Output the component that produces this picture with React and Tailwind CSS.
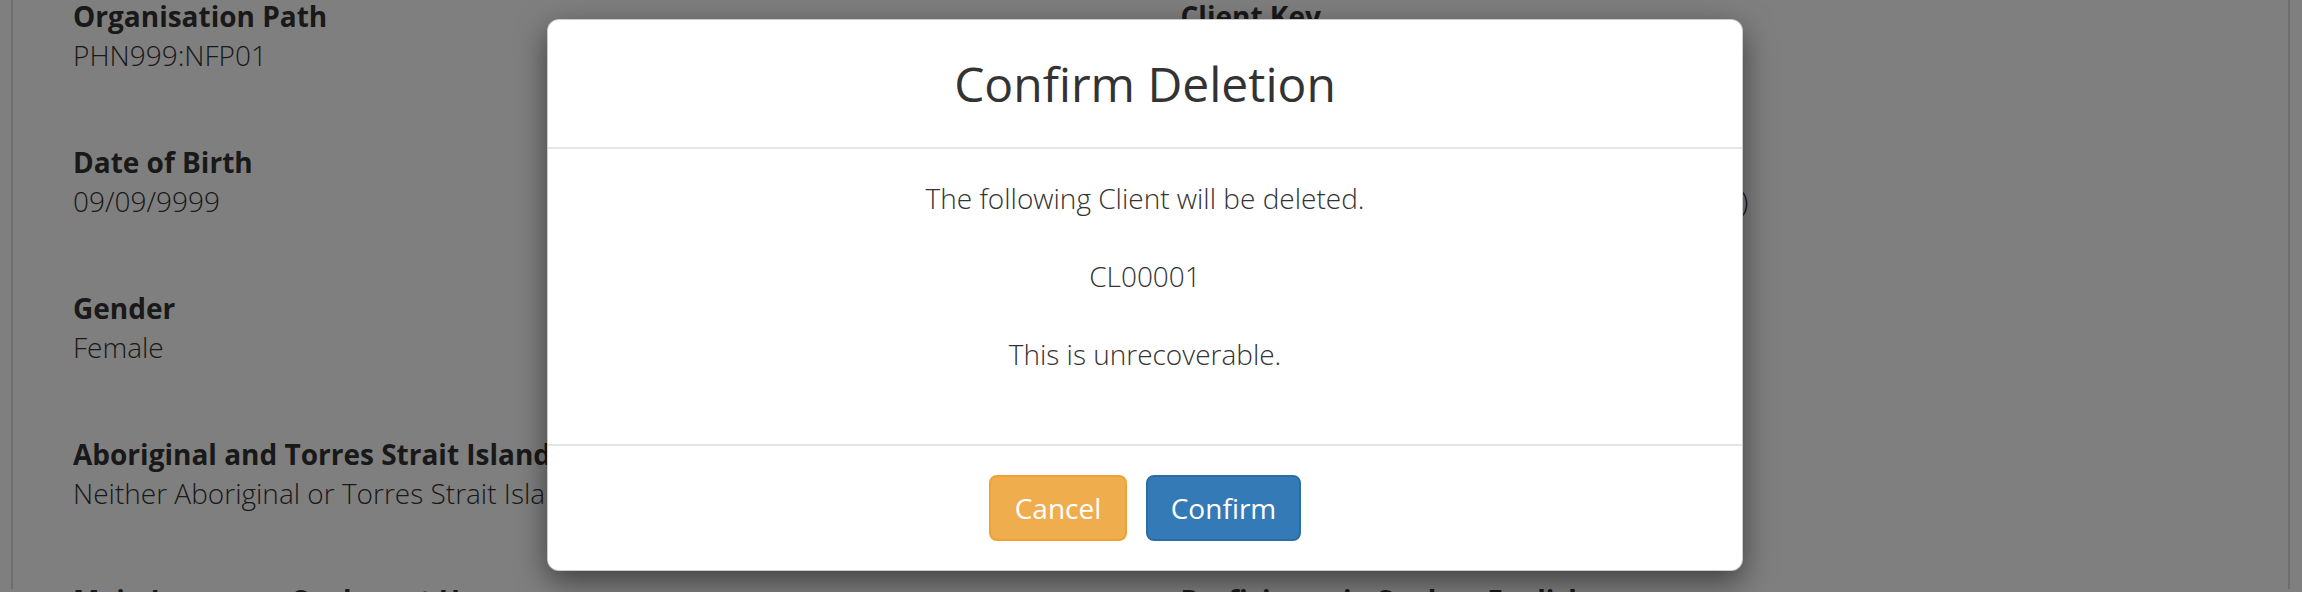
import React from 'react';

// Client details behind the modal
const leftFields = [
  { label: 'Organisation Path', value: 'PHN999:NFP01' },
  { label: 'Date of Birth', value: '09/09/9999' },
  { label: 'Gender', value: 'Female' },
  { label: 'Aboriginal and Torres Strait Islander Status', value: 'Neither Aboriginal or Torres Strait Islander origin' },
  { label: 'Main Language Spoken at Home', value: 'English' },
];

const rightFields = [
  { label: 'Client Key', value: 'CL00001' },
  { label: 'Date of Birth Accuracy', value: 'Accurate day, accurate month, estimated (AE)' },
  { label: 'Client Status', value: 'Active' },
  { label: 'Country of Birth', value: 'Australia' },
  { label: 'Proficiency in Spoken English', value: 'Very well' },
];

const Field = ({ label, value }) => (
  <div className="mb-[68px]">
    <div className="text-[28px] leading-[38px] font-bold whitespace-nowrap">{label}</div>
    <div className="text-[28px] leading-[40px] font-light whitespace-nowrap">{value}</div>
  </div>
);

const App = () => {
  return (
    <div className="relative h-[592px] w-[2302px] overflow-hidden bg-white text-[#333] font-['Open_Sans',sans-serif]">

      {/* Page panel */}
      <div className="ml-[11px] h-full w-[2279px] border-x-2 border-[#dddddd] px-[30px]">
        <div className="-mt-[3px] grid grid-cols-2">
          <div className="px-[30px]">
            {leftFields.map(f => <Field key={f.label} {...f} />)}
          </div>
          <div className="px-[30px]">
            {rightFields.map(f => <Field key={f.label} {...f} />)}
          </div>
        </div>
      </div>

      {/* Backdrop */}
      <div className="absolute inset-0 bg-black/50" />

      {/* Modal */}
      <div className="absolute left-[547px] top-[19px] w-[1196px] rounded-[12px] border border-black/20 bg-white shadow-[0_10px_30px_rgba(0,0,0,0.5)]">
        <div className="flex h-[129px] items-center justify-center border-b-2 border-[#e5e5e5]">
          <h4 className="text-[48px] leading-[52px] text-[#333] font-normal">Confirm Deletion</h4>
        </div>

        <div className="flex h-[295px] flex-col items-center pt-[29px] text-[28px] leading-[40px] font-light text-[#333]">
          <p className="mb-[38px]">The following Client will be deleted.</p>
          <p className="mb-[38px]">CL00001</p>
          <p>This is unrecoverable.</p>
        </div>

        <div className="flex h-[126px] items-center justify-center gap-[19px] border-t-2 border-[#e5e5e5]">
          <button className="h-[66px] w-[138px] rounded-[8px] border-2 border-[#eea236] bg-[#f0ad4e] text-[28px] text-white">
            Cancel
          </button>
          <button className="h-[66px] w-[155px] rounded-[8px] border-2 border-[#2e6da4] bg-[#337ab7] text-[28px] text-white">
            Confirm
          </button>
        </div>
      </div>
    </div>
  );
};

export default App;
